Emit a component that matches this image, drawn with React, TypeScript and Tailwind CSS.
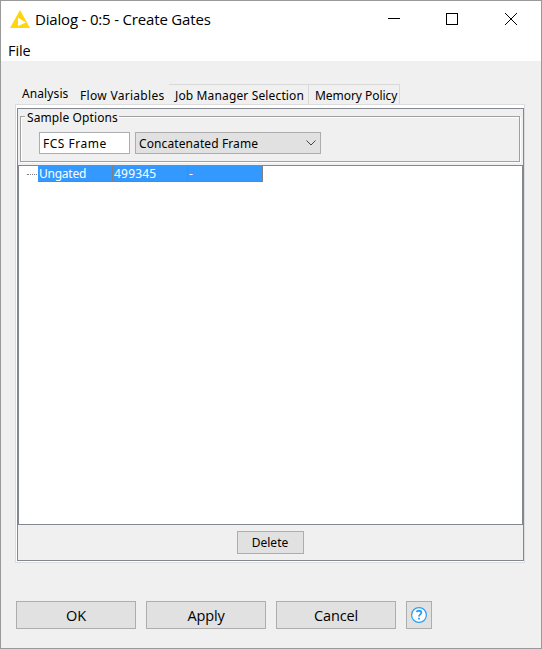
import React from "react";

const segoe = "font-['Open_Sans','Noto_Sans',sans-serif]";
const tahoma = "font-['Noto_Sans','DejaVu_Sans',sans-serif]";

function TitleBar() {
  return (
    <header className="flex h-[38px] items-start bg-white">
      <svg className="ml-[9px] mt-[9px] h-[18px] w-[20px] shrink-0" viewBox="0 0 20 18">
        <path d="M10 0 L20 18 H0 Z" fill="#ffd60a" />
        <path d="M8 7.8 L16 12.5 L8 16 Z" fill="#fff" />
      </svg>
      <h1 className={`${segoe} ml-[5px] mt-[8px] whitespace-nowrap text-[15px] leading-[20px] tracking-[-0.18px]`}>
        Dialog - 0:5 - Create Gates
      </h1>
      <svg className="ml-auto mr-[22px] mt-[10px] h-[16px] w-[132px]" viewBox="0 0 132 16" fill="none" stroke="#000" shapeRendering="crispEdges">
        <path d="M1 7.5H13M59.5 2.5H70.5V13.5H59.5Z" />
        <path d="M118 2L130 14M130 2L118 14" shapeRendering="auto" />
      </svg>
    </header>
  );
}

function TabStrip() {
  return (
    <nav className={`${tahoma} ml-[14px] flex h-[20px] whitespace-nowrap text-[12px] leading-[16px]`}>
      <div className="w-[58px] pl-[7px] pt-[2px] tracking-[0.1px]">Analysis</div>
      <div className="w-[96px] pl-[7px] pt-[4px] tracking-[0.3px]">Flow Variables</div>
      <div className="h-[20px] w-[140px] border-r border-t border-[#d9d9d9] pl-[6px] pt-[3px] tracking-[0.14px]">Job Manager Selection</div>
      <div className="h-[20px] w-[91px] border-r border-t border-[#d9d9d9] pl-[6px] pt-[3px] tracking-[-0.05px]">Memory Policy</div>
    </nav>
  );
}

function SampleOptions() {
  return (
    <fieldset className={`${tahoma} relative ml-[2px] mt-[7px] h-[46px] w-[500px] border border-[#a0a0a0] text-[12px] shadow-[inset_1px_1px_0_#fff,1px_1px_0_#fff]`}>
      <span className="absolute left-[4px] top-[-7px] h-[16px] whitespace-nowrap bg-[#f0f0f0] pl-[2px] pr-px leading-[16px] tracking-[0.1px]">Sample Options</span>
      <div className="flex gap-[5px] pl-[18px] pt-[15px] leading-[21px]">
        <div className="h-[22px] w-[91px] border border-[#abadb3] bg-white pl-[3px] tracking-[0.5px]">FCS Frame</div>
        <div className="flex h-[22px] w-[186px] items-center justify-between border border-[#adadad] bg-[#e1e1e1] pl-[3px] pr-[4px] tracking-[0.1px]">
          <span className="pt-px">Concatenated Frame</span>
          <svg className="h-[6px] w-[10px]" viewBox="0 0 10 6" fill="none" stroke="#444">
            <path d="M0.5 0.5L5 5L9.5 0.5" />
          </svg>
        </div>
      </div>
    </fieldset>
  );
}

function GateTree() {
  return (
    <div className={`${tahoma} mt-[3px] h-[360px] border border-[#828790] bg-white text-[12px] leading-[15px] text-white`}>
      <div className="flex">
        <div className="ml-[8px] mr-px mt-[8px] h-0 w-[10px] border-t border-dotted border-[#808080]" />
        <div className="flex h-[16px] border-b border-[#808080] bg-[#3399ff]">
          <div className="w-[75px] border-r border-[#808080] pl-px tracking-[-0.25px]">Ungated</div>
          <div className="w-[75px] border-r border-[#808080] pl-px tracking-[0.2px]">499345</div>
          <div className="w-[75px] border-r border-[#808080] pl-px">-</div>
        </div>
      </div>
    </div>
  );
}

function DialogButton({ children }: { children: React.ReactNode }) {
  return (
    <button className={`${segoe} h-[28px] w-[120px] border border-[#adadad] bg-[#e1e1e1] pt-px text-[14.5px] leading-[25px] tracking-[-0.15px]`}>
      {children}
    </button>
  );
}

export default function App() {
  return (
    <div className="flex h-[649px] w-[542px] flex-col overflow-hidden border border-[#999] bg-[#f0f0f0] text-black">
      <TitleBar />
      <div className={`${segoe} h-[22px] bg-white pl-[7px] text-[14.5px] leading-[23px] tracking-[-0.1px]`}>File</div>
      <div className="h-[23px]" />
      <TabStrip />
      <main className="ml-[14px] h-[459px] w-[510px] border border-[#dcdcdc] bg-white pl-px pb-px pt-[3px]">
        <section className="h-[453px] w-[507px] border border-[#828790] bg-[#f0f0f0]">
          <SampleOptions />
          <GateTree />
          <div className="flex h-[35px] justify-center pt-[6px]">
            <button className={`${tahoma} h-[23px] w-[67px] border border-[#adadad] bg-[#e1e1e1] pr-px text-[12px] leading-[21px]`}>Delete</button>
          </div>
        </section>
      </main>
      <footer className="ml-[15px] mt-[38px] flex gap-[10px]">
        <DialogButton>OK</DialogButton>
        <DialogButton>Apply</DialogButton>
        <DialogButton>Cancel</DialogButton>
        <button className="flex h-[28px] w-[26px] items-center justify-center border border-[#adadad] bg-[#e1e1e1]">
          <svg className="h-[16px] w-[16px]" viewBox="0 0 16 16" fill="none" stroke="#2a9df4">
            <circle cx="8" cy="8" r="7.4" fill="#fff" strokeWidth="1.2" />
            <path d="M5.7 5.2C6 3.2 10.4 3.2 10.3 5.7C10.2 7.3 8 7.5 8 9.6M8 10.8V12.6" strokeWidth="1.8" />
          </svg>
        </button>
      </footer>
    </div>
  );
}
